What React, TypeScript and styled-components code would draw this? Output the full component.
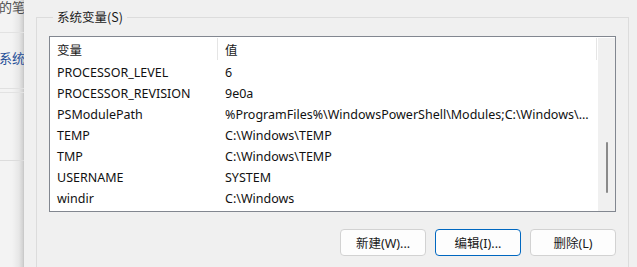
import React from "react";
import styled, { createGlobalStyle } from "styled-components";

const Global = createGlobalStyle`
  html, body { margin: 0; padding: 0; }
  body {
    width: 637px; height: 267px; overflow: hidden; background: #f0f0f0;
    font-family: "Noto Sans", "Noto Sans CJK SC", sans-serif;
    font-size: 12px; color: #1a1a1a;
  }
`;

const Screen = styled.div`
  display: flex;
  width: 637px;
  height: 267px;
  overflow: hidden;
`;

const BackWindow = styled.div`
  width: 24px;
  flex: none;
  overflow: hidden;
  display: flex;
  flex-direction: column;
  background: linear-gradient(to right, rgba(0,0,0,0) 0, rgba(0,0,0,0) 12px, rgba(0,0,0,0.05) 19px, rgba(0,0,0,0.14) 23px, rgba(0,0,0,0.2) 24px), #f3f3f3;
`;

const BackTitle = styled.div`
  height: 32px;
  border-bottom: 1px solid #e2e2e2;
  font-family: "Noto Sans CJK SC", sans-serif;
  font-size: 13px;
  line-height: 14px;
  color: #505050;
  white-space: nowrap;
  margin-left: -1px;
`;

const BackLink = styled.div`
  height: 56px;
  border-bottom: 1px solid #e0e0e0;
  font-family: "Noto Sans CJK SC", sans-serif;
  font-size: 13px;
  line-height: 16px;
  padding-top: 17px;
  box-sizing: border-box;
  color: #1f4f98;
  white-space: nowrap;
  margin-left: -1px;
`;

const BackSection = styled.div`
  height: 67px;
  margin-top: 3px;
  border-top: 1px solid #e2e2e2;
  border-bottom: 1px solid #dcdcdc;
`;

const FrontWindow = styled.div`
  flex: 1;
  background: #f0f0f0;
  padding: 9px 0 0 12px;
  box-sizing: border-box;
`;

const Group = styled.fieldset`
  margin: 0;
  width: 593px;
  box-sizing: border-box;
  height: 300px;
  border: 1px solid #dcdcdc;
  border-radius: 0;
  padding: 11px 0 0 12px;
`;

const Legend = styled.legend`
  margin-left: 4px;
  padding: 0 4px;
  font-family: "Noto Sans CJK SC", sans-serif;
  font-size: 12.5px;
  line-height: 16px;
  color: #1a1a1a;
`;

const ListBox = styled.div`
  width: 567px;
  height: 176px;
  box-sizing: border-box;
  border: 1px solid #828790;
  background: #fff;
  display: grid;
  grid-template-columns: 1fr 17px;
`;

const Table = styled.div`
  display: flex;
  flex-direction: column;
  overflow: hidden;
`;

const HeaderRow = styled.div`
  display: grid;
  grid-template-columns: 168px 1fr;
  height: 25px;
  align-items: stretch;
`;

const HeaderCell = styled.div<{ $last?: boolean }>`
  display: flex;
  align-items: center;
  padding-left: 7px;
  font-family: "Noto Sans CJK SC", sans-serif;
  font-size: 12.5px;
  color: #1a1a1a;
  border-right: 1px solid #e5e5e5;
  margin: 1px 0 2px;
  ${(p) => (p.$last ? "margin-right: 1px;" : "")}
`;

const Row = styled.div`
  display: grid;
  grid-template-columns: 168px 1fr;
  height: 21px;
  align-items: center;
`;

const Cell = styled.div`
  padding-left: 7px;
  white-space: nowrap;
  overflow: hidden;
  font-size: 12.5px;
  color: #111;
`;

const ScrollTrack = styled.div`
  background: #f0f0f0;
  margin-top: 1px;
  display: flex;
  justify-content: center;
  padding-top: 104px;
  box-sizing: border-box;
`;

const Thumb = styled.div`
  width: 2px;
  height: 51px;
  border-radius: 1px;
  background: #8a8a8a;
  margin-left: 1px;
`;

const ButtonRow = styled.div`
  display: flex;
  justify-content: flex-end;
  gap: 9px;
  width: 567px;
  margin-top: 17px;
`;

const Button = styled.button<{ $focused?: boolean }>`
  width: 86px;
  height: 27px;
  box-sizing: border-box;
  border-radius: 4px;
  background: #fdfdfd;
  border: 1px solid ${(p) => (p.$focused ? "#0067c0" : "#d2d2d2")};
  font-family: "Noto Sans", "Noto Sans CJK SC", sans-serif;
  font-size: 12.5px;
  color: #1a1a1a;
  padding: 0;
`;

const rows: [string, string][] = [
  ["PROCESSOR_LEVEL", "6"],
  ["PROCESSOR_REVISION", "9e0a"],
  ["PSModulePath", "%ProgramFiles%\\WindowsPowerShell\\Modules;C:\\Windows\\..."],
  ["TEMP", "C:\\Windows\\TEMP"],
  ["TMP", "C:\\Windows\\TEMP"],
  ["USERNAME", "SYSTEM"],
  ["windir", "C:\\Windows"],
];

export default function App() {
  return (
    <>
      <Global />
      <Screen>
        <BackWindow>
          <BackTitle>的笔记</BackTitle>
          <BackLink>系统设置</BackLink>
          <BackSection />
        </BackWindow>
        <FrontWindow>
          <Group>
            <Legend>系统变量(S)</Legend>
            <ListBox>
              <Table>
                <HeaderRow>
                  <HeaderCell>变量</HeaderCell>
                  <HeaderCell $last>值</HeaderCell>
                </HeaderRow>
                {rows.map(([k, v]) => (
                  <Row key={k}>
                    <Cell>{k}</Cell>
                    <Cell>{v}</Cell>
                  </Row>
                ))}
              </Table>
              <ScrollTrack>
                <Thumb />
              </ScrollTrack>
            </ListBox>
            <ButtonRow>
              <Button>新建(W)...</Button>
              <Button $focused>编辑(I)...</Button>
              <Button>删除(L)</Button>
            </ButtonRow>
          </Group>
        </FrontWindow>
      </Screen>
    </>
  );
}
